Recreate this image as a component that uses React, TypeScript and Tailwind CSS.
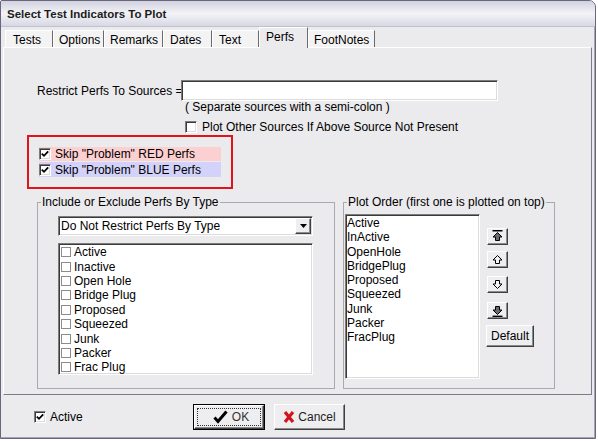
const tabs = [
  { label: "Tests", w: "w-[48px] ml-[2px] pl-[7px]" },
  { label: "Options", w: "w-[51px] pl-[5px]" },
  { label: "Remarks", w: "w-[59px] pl-[5px]" },
  { label: "Dates", w: "w-[49px] pl-[6px]" },
  { label: "Text", w: "w-[47px] pl-[6px]" },
  { label: "Perfs", w: "w-[49px] pl-[6px]", active: true },
  { label: "FootNotes", w: "w-[67px] pl-[5px]" },
];

const perfTypes = ["Active", "Inactive", "Open Hole", "Bridge Plug", "Proposed", "Squeezed", "Junk", "Packer", "Frac Plug"];
const plotOrder = ["Active", "InActive", "OpenHole", "BridgePlug", "Proposed", "Squeezed", "Junk", "Packer", "FracPlug"];

const sunken =
  "bg-white border border-t-[#7c7c7c] border-l-[#7c7c7c] border-b-white border-r-white shadow-[inset_1px_1px_0_#3a3a3a,inset_-1px_-1px_0_#dcdcdc]";
const raised =
  "bg-[#eeeef0] border border-t-white border-l-white border-b-[#404040] border-r-[#404040] shadow-[inset_-1px_-1px_0_#8a8a8a]";

function CheckBox({ checked }: { checked?: boolean }) {
  return (
    <span className={`w-[12px] h-[12px] shrink-0 flex items-center justify-center ${sunken}`}>
      {checked && (
        <svg width="8" height="8" viewBox="0 0 8 8">
          <path d="M0.8 3.6 L3 5.8 L7.2 1.4" fill="none" stroke="#000" strokeWidth="1.8" />
        </svg>
      )}
    </span>
  );
}

function Arrow({ kind }: { kind: "top" | "up" | "down" | "bottom" }) {
  const up = kind === "top" || kind === "up";
  const filled = kind === "top" || kind === "bottom";
  const pts = up
    ? "5.5,1.5 10,6 7.5,6 7.5,9.5 3.5,9.5 3.5,6 1,6"
    : "5.5,9.5 10,5 7.5,5 7.5,1.5 3.5,1.5 3.5,5 1,5";
  return (
    <svg width="11" height="13" viewBox="0 -1 11 13">
      {kind === "top" && <line x1="0.5" y1="-0.2" x2="10.5" y2="-0.2" stroke="#000" strokeWidth="1.4" />}
      <polygon points={pts} fill={filled ? "#6a6a6a" : "#f4f4f4"} stroke="#000" strokeWidth="1" />
      {kind === "bottom" && <line x1="0.5" y1="11.3" x2="10.5" y2="11.3" stroke="#000" strokeWidth="1.4" />}
    </svg>
  );
}

export default function App() {
  return (
    <div className="w-[598px] h-[441px] bg-white font-['Liberation_Sans',Arial,sans-serif] text-[12px] leading-[14px] text-black">
      <div className="w-[596px] h-[439px] flex flex-col border border-[#66667c] rounded-tr-[7px] rounded-tl-[2px] bg-[#ebebee] overflow-hidden shadow-[inset_-1px_-1px_0_#a4a4b6]">
        <div className="h-[26px] shrink-0 flex items-center pl-[6px] bg-gradient-to-b from-[#d2d2e0] via-[#f3f3f7] to-[#d8d8e4] border-b border-[#c0c0ce]">
          <span className="font-bold text-[11.5px] text-[#1c1c1c]">Select Test Indicators To Plot</span>
        </div>

        <div className="flex-1 flex flex-col pl-[2px] pr-[3px]">
          <div className="h-[20px] shrink-0 flex items-end">
            {tabs.map((t) =>
              t.active ? (
                <div
                  key={t.label}
                  className={`${t.w} h-[21px] -mb-[1px] relative z-10 bg-[#ebebee] border-t border-l border-r border-t-white border-l-white border-r-[#6a6a6a] pt-[2px]`}
                >
                  {t.label}
                </div>
              ) : (
                <div
                  key={t.label}
                  className={`${t.w} h-[17px] bg-[#f3f3f4] border-t border-l border-r border-t-white border-l-white border-r-[#6a6a6a] pt-[2px]`}
                >
                  {t.label}
                </div>
              ),
            )}
          </div>

          <div className="h-[348px] shrink-0 flex flex-col border border-t-white border-l-white border-b-[#7a7a8a] border-r-[#7a7a8a]">
            <div className="mt-[32px] h-[21px] flex items-center">
              <span className="w-[177px] pl-[33px] whitespace-nowrap shrink-0 overflow-hidden">Restrict Perfs To Sources =</span>
              <div className={`w-[317px] h-[21px] ${sunken}`} />
            </div>
            <div className="ml-[181px] leading-[13px]">( Separate sources with a semi-colon )</div>
            <div className="ml-[181px] mt-[6px] h-[13px] flex items-center gap-[5px]">
              <CheckBox />
              <span>Plot Other Sources If Above Source Not Present</span>
            </div>

            <div className="ml-[23px] mt-[2px] w-[206px] h-[54px] border-2 border-[#e3131b] pt-[10px] pl-[10px]">
              <div className="w-[182px] h-[14px] bg-[#fcd0d0] flex items-center gap-[4px]">
                <CheckBox checked />
                <span>Skip "Problem" RED Perfs</span>
              </div>
              <div className="w-[182px] h-[15px] mt-[1px] bg-[#d2d2fa] flex items-center gap-[4px]">
                <CheckBox checked />
                <span>Skip "Problem" BLUE Perfs</span>
              </div>
            </div>

            <div className="mt-[6px] ml-[33px] flex gap-[8px]">
              <fieldset className="w-[298px] h-[194px] border border-[#a9a9b0]">
                <legend className="ml-[3px] px-[1px] leading-[14px]">Include or Exclude Perfs By Type</legend>
                <div className={`ml-[20px] mt-[7px] w-[255px] h-[20px] flex items-center ${sunken}`}>
                  <span className="flex-1 pl-[2px]">Do Not Restrict Perfs By Type</span>
                  <span className={`w-[16px] h-[16px] mr-[1px] flex items-center justify-center ${raised}`}>
                    <svg width="7" height="4" viewBox="0 0 7 4">
                      <polygon points="0,0 7,0 3.5,4" fill="#000" />
                    </svg>
                  </span>
                </div>
                <div className={`ml-[20px] mt-[7px] w-[255px] h-[132px] pl-[2px] pt-[1px] ${sunken}`}>
                  {perfTypes.map((p) => (
                    <div key={p} className="h-[14.4px] flex items-center gap-[3px]">
                      <span className="w-[10px] h-[10px] border border-[#8c8c8c] bg-white" />
                      <span>{p}</span>
                    </div>
                  ))}
                </div>
              </fieldset>

              <fieldset className="w-[212px] h-[194px] border border-[#a9a9b0]">
                <legend className="ml-[3px] px-[1px] leading-[14px]">Plot Order (first one is plotted on top)</legend>
                <div className="flex">
                  <div className={`ml-[1px] mt-[5px] w-[135px] h-[165px] pl-[1px] pt-[1px] ${sunken}`}>
                    {plotOrder.map((p) => (
                      <div key={p} className="h-[14.25px] flex items-center">
                        {p}
                      </div>
                    ))}
                  </div>
                  <div className="ml-[7px] flex flex-col">
                    <button className={`mt-[19px] w-[21px] h-[17px] flex items-center justify-center ${raised}`}>
                      <Arrow kind="top" />
                    </button>
                    <button className={`mt-[6px] w-[21px] h-[17px] flex items-center justify-center ${raised}`}>
                      <Arrow kind="up" />
                    </button>
                    <button className={`mt-[8px] w-[21px] h-[17px] flex items-center justify-center ${raised}`}>
                      <Arrow kind="down" />
                    </button>
                    <button className={`mt-[9px] w-[21px] h-[17px] flex items-center justify-center ${raised}`}>
                      <Arrow kind="bottom" />
                    </button>
                    <button className={`mt-[6px] -ml-[1px] w-[48px] h-[22px] flex items-center justify-center ${raised}`}>
                      Default
                    </button>
                  </div>
                </div>
              </fieldset>
            </div>
          </div>

          <div className="flex-1 flex items-center">
            <div className="w-[190px] pl-[31px] flex items-center gap-[4px]">
              <CheckBox checked />
              <span>Active</span>
            </div>
            <button className="w-[72px] h-[26px] border border-black">
              <div className={`w-full h-full ${raised} p-[2px]`}>
                <div className="w-full h-full border border-dotted border-[#333] flex items-center justify-center gap-[4px] pl-[4px]">
                  <svg width="15" height="14" viewBox="0 0 15 14">
                    <path d="M1.5 7.5 L5 11.5 L13.5 1.5" fill="none" stroke="#000" strokeWidth="3" />
                  </svg>
                  <span className="text-[#333]">OK</span>
                </div>
              </div>
            </button>
            <button className={`ml-[9px] w-[71px] h-[26px] flex items-center justify-center gap-[3px] ${raised}`}>
              <svg width="12" height="14" viewBox="0 0 12 14">
                <path d="M2 2 L10 12 M10 2 L2 12" fill="none" stroke="#d4141c" strokeWidth="3.2" />
              </svg>
              <span className="text-[#222]">Cancel</span>
            </button>
          </div>
        </div>
      </div>
    </div>
  );
}
